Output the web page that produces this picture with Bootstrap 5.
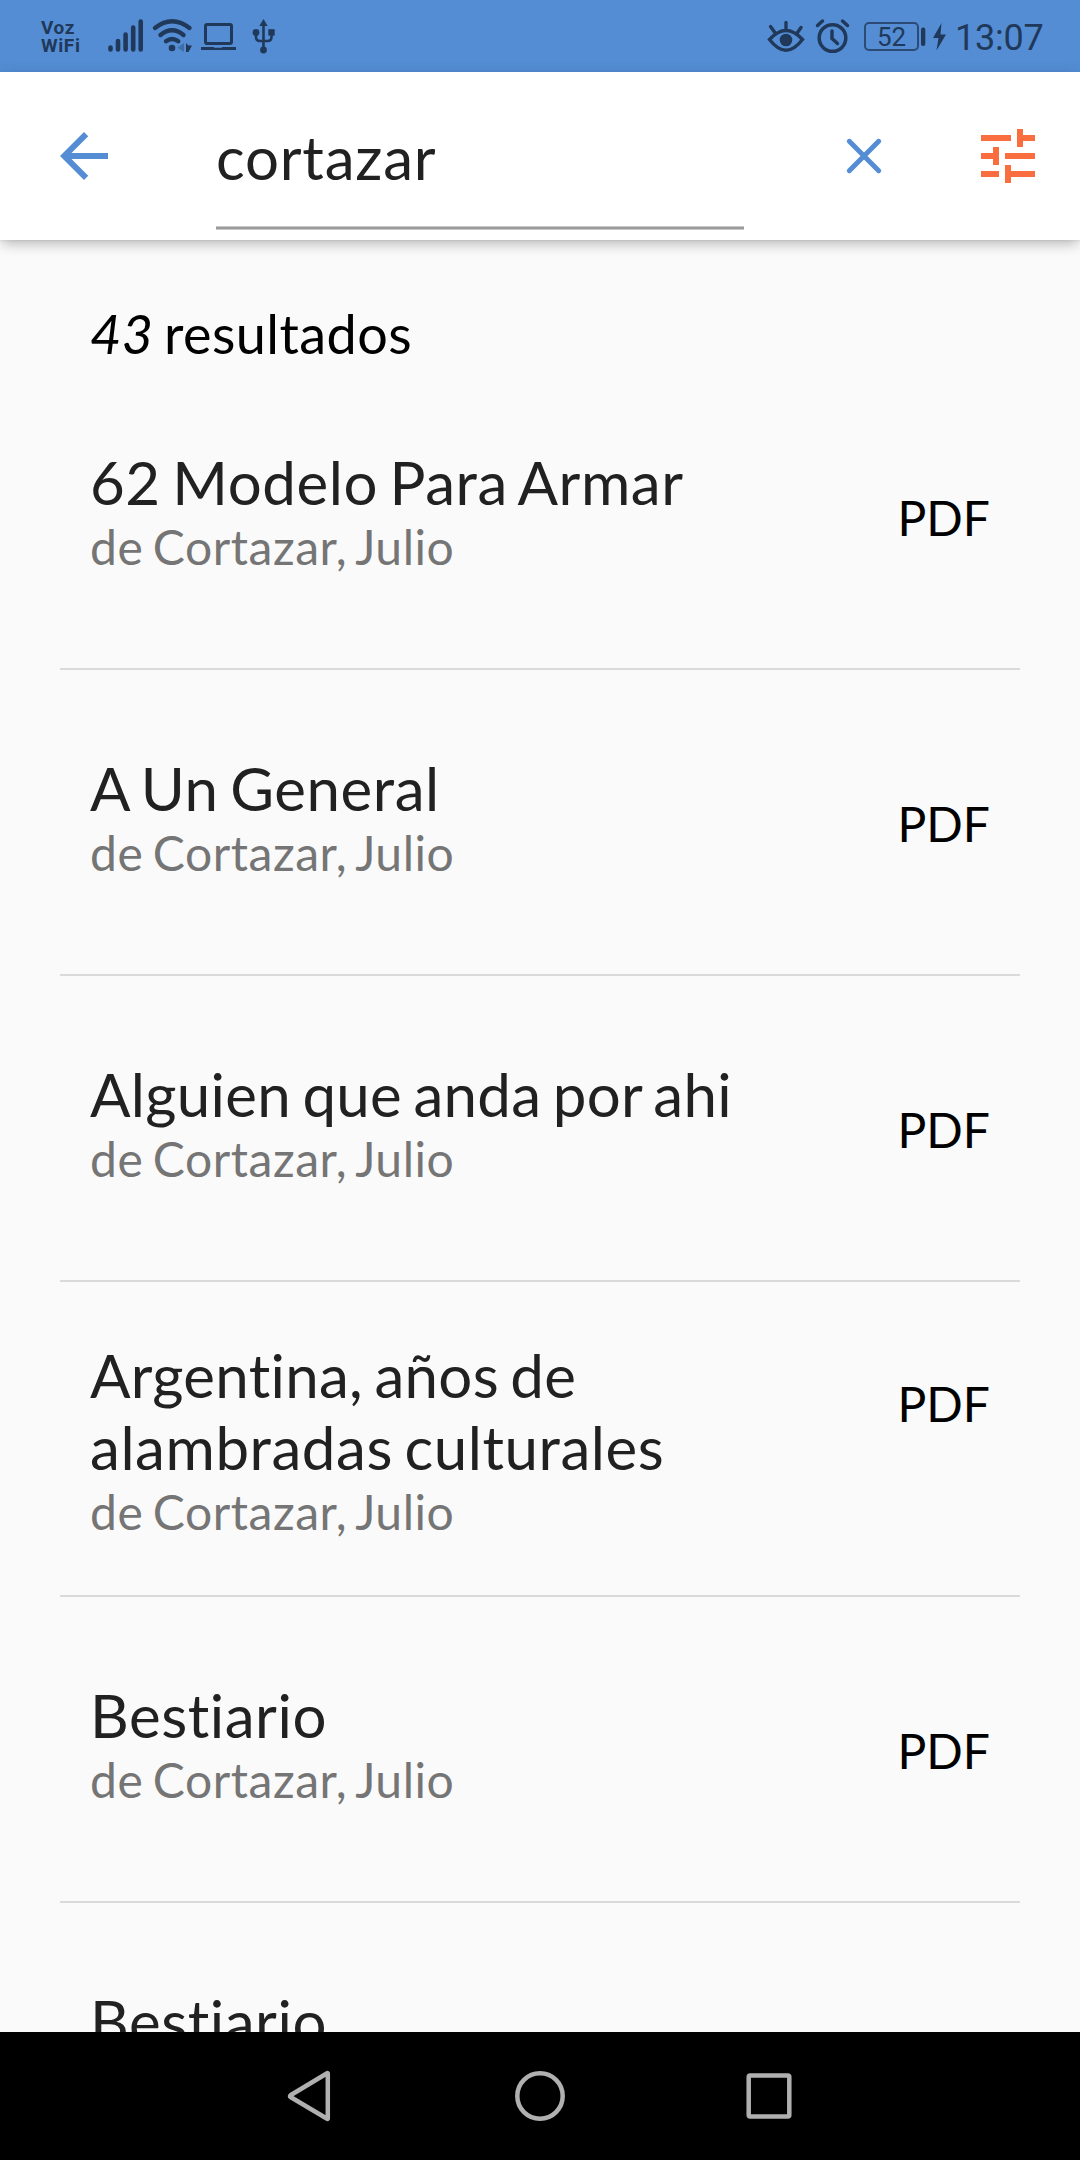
<!DOCTYPE html>
<html lang="es">
<head>
<meta charset="utf-8">
<meta name="viewport" content="width=device-width, initial-scale=1">
<title>cortazar</title>
<link href="https://cdn.jsdelivr.net/npm/bootstrap@5.3.0/dist/css/bootstrap.min.css" rel="stylesheet">
<style>
  html, body { height: 2160px; overflow: hidden; }
  body { width: 1080px; background: #fafafa; font-family: Lato, sans-serif; font-variant-ligatures: none; color: #000; }
  svg { display: block; flex: none; }
  .status-bar { height: 72px; background: #548dd4; color: #20395a; font-family: Roboto, sans-serif; padding: 0 37px 0 41px; }
  .carrier { font-size: 19px; line-height: 18px; font-weight: 700; width: 67px; letter-spacing: .6px; padding-top: 1px; }
  .status-bar .clock { font-size: 36px; line-height: 72px; padding-top: 3px; margin-left: 8px; width: 88px; letter-spacing: -.2px; white-space: nowrap; }
  .battery { width: 55px; height: 29px; border: 2px solid #2b4a74; border-radius: 5px; font-size: 26px; line-height: 26px; }
  .app-bar { height: 168px; background: #fff; z-index: 1; padding: 0 36px 0 48px; box-shadow: 0 6px 12px -3px rgba(0,0,0,.18), 0 3px 15px rgba(0,0,0,.12), 0 1px 2px rgba(0,0,0,.06); }
  .search-box { width: 528px; height: 158px; margin-left: 96px; color: #212121; font-size: 60px; line-height: 72px; letter-spacing: .8px; padding-top: 49px; position: relative; }
  .search-box::after { content: ""; position: absolute; left: 0; right: 0; bottom: 0; height: 4px; background: linear-gradient(#c9c9c9 0 1px, #9b9b9b 1px 3px, #c9c9c9 3px); }
  .results { height: 1792px; padding: 0 60px; }
  .result-count { height: 124px; padding: 61px 30px 0; font-size: 54px; line-height: 66px; letter-spacing: .45px; word-spacing: -3.9px; }
  .result { height: 306px; padding: 82px 30px 0; border-bottom: 2px solid #dadada; }
  .result.two-line { height: 315px; padding-top: 57px; }
  .result h2 { font-size: 60px; line-height: 72px; font-weight: 400; color: #212121; letter-spacing: .56px; word-spacing: -4.3px; }
  .result h2.snug, .result h2 .snug { letter-spacing: .31px; }
  .author { font-size: 48px; line-height: 58px; color: #757575; letter-spacing: .57px; word-spacing: -3.5px; }
  .format { font-size: 48px; line-height: 58px; margin-top: 43px; }
  .two-line .format { margin-top: 36px; }
  .nav-keys { height: 128px; background: #000; padding: 0 284px; }
</style>
<script src="https://cdn.jsdelivr.net/npm/bootstrap@5.3.0/dist/js/bootstrap.bundle.min.js"></script>
</head>
<body class="d-flex flex-column m-0">
<header class="status-bar d-flex align-items-center flex-shrink-0">
  <div class="carrier">Voz<br>WiFi</div>
  <svg width="35" height="72" viewBox="108 0 35 72" stroke="currentColor" stroke-width="4.6" stroke-linecap="round"><path d="M110.5 47.5v2M118 41v8.500M125.600 34.500v15M133.200 27.500v22M140.700 21.500v28"/></svg>
  <svg class="ms-2" width="44" height="72" viewBox="151 0 44 72" fill="none" stroke="currentColor" stroke-width="4.400" stroke-linecap="round"><path d="M155 28Q172 14.500 189.500 28M160.500 35Q172 25.500 183.500 35M166 41.200Q172 36.800 178.300 41.200"/><circle cx="172" cy="48" r="3.300" fill="currentColor" stroke="none"/><path d="M184 43v9l-6.500-4.200z" fill="#3f6da8" stroke="none"/><path d="M186 43l2.500 2.500h3.500l-3.500 6.500h-2.500z" fill="currentColor" stroke="none"/></svg>
  <svg style="margin-left:6px" width="35" height="72" viewBox="201 0 35 72" fill="none" stroke="currentColor" stroke-width="3"><rect x="205.500" y="24.500" width="26" height="19" rx="1.500"/><path d="M201 48.500h35"/><path d="M214 47h8" stroke="#548dd4" stroke-width="1.500"/></svg>
  <svg style="margin-left:15px" width="26" height="72" viewBox="251 0 26 72" fill="none" stroke="currentColor" stroke-width="2.600"><path d="M263.500 23v26M256 33v4q0 4 4 4h7.500q4 0 4-4v-4"/><path d="M263.500 19l4.200 7h-8.400z" fill="currentColor" stroke="none"/><circle cx="256" cy="32.500" r="3.400" fill="currentColor" stroke="none"/><rect x="268.300" y="29.200" width="6.400" height="6.400" fill="currentColor" stroke="none"/><circle cx="263.500" cy="50" r="3.400" fill="currentColor" stroke="none"/></svg>
  <svg class="ms-auto" width="38" height="72" viewBox="767 0 38 72" fill="none" stroke="currentColor" stroke-width="3.400" stroke-linecap="round"><path d="M769.500 39.500Q786 21.500 802.500 39.500Q786 61 769.500 39.500zM786 22.500v7M770.500 26.500l4 5.500M801 27.500l-3.500 5"/><circle cx="786" cy="40" r="6.300" fill="currentColor" stroke="none"/></svg>
  <svg style="margin-left:10px" width="35" height="72" viewBox="815 0 35 72" fill="none" stroke="currentColor" stroke-width="3.500" stroke-linecap="round"><circle cx="832.500" cy="38" r="13.300"/><path d="M832 31v7.500l5.500 5M817.500 25.500l5-4.500M847.500 25.500l-5-4.500"/></svg>
  <div class="battery d-flex justify-content-center" style="margin-left:14px">52</div>
  <svg style="margin-left:2px" width="26" height="72" viewBox="921 0 26 72"><rect x="921" y="27.500" width="4.300" height="18.500" rx="2" fill="currentColor"/><path d="M941.500 23L933 38h5.500l-2 12.500L946 34.500h-5.500z" fill="currentColor"/></svg>
  <div class="clock">13:07</div>
</header>
<nav class="app-bar d-flex position-relative flex-shrink-0">
  <svg class="align-self-center" width="72" height="72" viewBox="0 0 24 24" fill="#548dd4"><path d="M20 11H7.830l5.590-5.590L12 4l-8 8 8 8 1.410-1.410L7.830 13H20v-2z"/></svg>
  <div class="search-box">cortazar</div>
  <svg class="align-self-center" style="margin-left:84px" width="72" height="72" viewBox="0 0 72 72" stroke="#548dd4" stroke-width="5"><path d="M21.300 21.300l29.400 29.400M50.700 21.300L21.300 50.700" stroke-linecap="round"/></svg>
  <svg class="align-self-center ms-auto" width="72" height="72" viewBox="0 0 24 24" fill="#fa6d3e"><path d="M3 17v2h6v-2H3zM3 5v2h10V5H3zm10 16v-2h8v-2h-8v-2h-2v6h2zM7 9v2H3v2h4v2h2V9H7zm14 4v-2H11v2h10zm-6-4h2V7h4V5h-4V3h-2v6z"/></svg>
</nav>
<main class="results overflow-hidden">
  <div class="result-count"><em>43</em> resultados</div>
  <div class="result d-flex justify-content-between"><div><h2 class="m-0">62 Modelo Para Armar</h2><div class="author">de Cortazar, Julio</div></div><div class="format">PDF</div></div>
  <div class="result d-flex justify-content-between"><div><h2 class="m-0">A Un General</h2><div class="author">de Cortazar, Julio</div></div><div class="format">PDF</div></div>
  <div class="result d-flex justify-content-between"><div><h2 class="m-0 snug">Alguien que anda por ahi</h2><div class="author">de Cortazar, Julio</div></div><div class="format">PDF</div></div>
  <div class="result two-line d-flex justify-content-between"><div><h2 class="m-0"><span class="snug">Argentina, años de</span><br>alambradas culturales</h2><div class="author">de Cortazar, Julio</div></div><div class="format">PDF</div></div>
  <div class="result d-flex justify-content-between"><div><h2 class="m-0">Bestiario</h2><div class="author">de Cortazar, Julio</div></div><div class="format">PDF</div></div>
  <div class="result d-flex justify-content-between"><div><h2 class="m-0">Bestiario</h2></div></div>
</main>
<footer class="nav-keys d-flex justify-content-between align-items-center flex-shrink-0">
  <svg width="50" height="60" viewBox="0 0 50 60" fill="none" stroke="#b0b0b0" stroke-width="4.500" stroke-linejoin="round"><path d="M43.800 7.500v45q0 .7-.7.300L6.500 31q-1-.8 0-1.700L43.100 7.200q.7-.4.700.300z"/></svg>
  <svg width="60" height="60" viewBox="0 0 60 60" fill="none" stroke="#b0b0b0" stroke-width="4.500"><circle cx="30" cy="30" r="22.700"/></svg>
  <svg width="50" height="60" viewBox="0 0 50 60" fill="none" stroke="#b0b0b0" stroke-width="4.500"><rect x="2.700" y="9.500" width="40.600" height="41" rx="1.500"/></svg>
</footer>
</body>
</html>
